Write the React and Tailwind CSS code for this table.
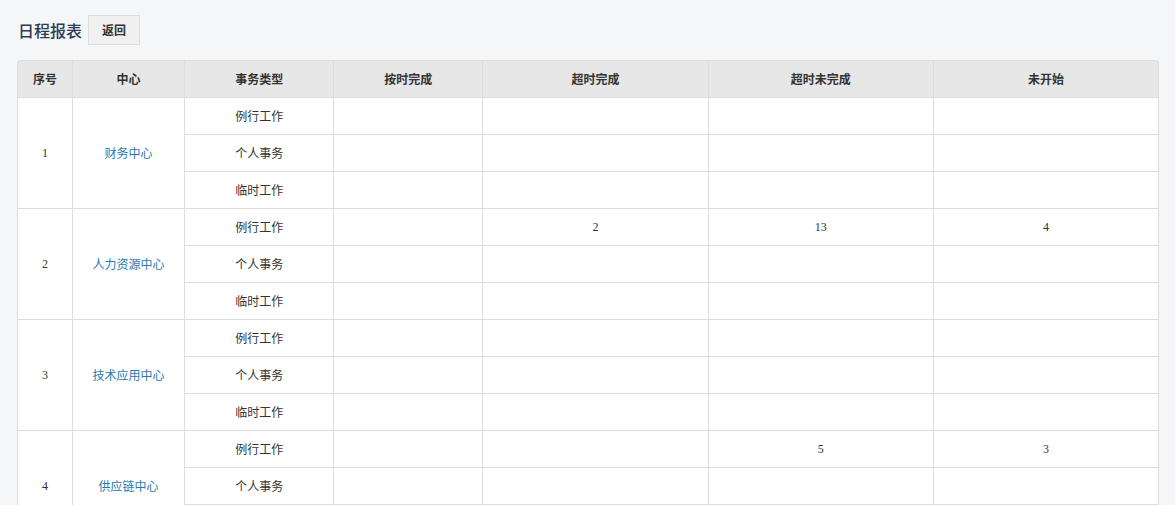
import React from 'react';

const cols = ['序号', '中心', '事务类型', '按时完成', '超时完成', '超时未完成', '未开始'];
const widths = ['w-[56px]', 'w-[112px]', 'w-[149px]', 'w-[149px]', 'w-[225px]', 'w-[225px]', 'w-[225px]'];
const types = ['例行工作', '个人事务', '临时工作'];

// values per center: [type][按时, 超时, 超时未完成, 未开始]
const centers = [
  { no: 1, name: '财务中心', data: [['', '', '', ''], ['', '', '', ''], ['', '', '', '']] },
  { no: 2, name: '人力资源中心', data: [['', '2', '13', '4'], ['', '', '', ''], ['', '', '', '']] },
  { no: 3, name: '技术应用中心', data: [['', '', '', ''], ['', '', '', ''], ['', '', '', '']] },
  { no: 4, name: '供应链中心', data: [['', '', '5', '3'], ['', '', '', ''], ['', '', '', '']] },
];

const cell = 'h-[37px] border-r border-b border-[#dddddd] text-center align-middle p-0';

export default function App() {
  return (
    <div
      className="min-h-screen bg-[#f5f6f8] pl-[17px] pt-[15px] text-[#333]"
      style={{ fontFamily: '"Noto Sans CJK SC", "Liberation Sans", sans-serif' }}
    >
      <div className="flex items-center h-[30px] mb-[15px]">
        <h1 className="ml-[1px] text-[16px] leading-none font-medium text-[#2b3a57]">日程报表</h1>
        <button
          type="button"
          className="ml-[6px] h-[30px] w-[52px] border border-[#dcdcdc] bg-[#f0f0f0] text-[12px] font-bold text-[#333]"
        >
          返回
        </button>
      </div>

      <table className="table-fixed border-separate border-spacing-0 w-[1142px] text-[12px]">
        <colgroup>
          {widths.map((w, i) => (
            <col key={i} className={w} />
          ))}
        </colgroup>
        <thead>
          <tr className="bg-[#e7e7e7]">
            {cols.map((c, i) => (
              <th
                key={c}
                className={`h-[38px] border-r border-b border-t border-[#dddddd] text-center align-middle p-0 font-bold text-[#333] ${
                  i === 0 ? 'border-l rounded-tl-[4px]' : ''
                } ${i === cols.length - 1 ? 'rounded-tr-[4px]' : ''}`}
              >
                {c}
              </th>
            ))}
          </tr>
        </thead>
        <tbody className="bg-white">
          {centers.map((c) =>
            c.data.map((row, r) => (
              <tr key={`${c.no}-${r}`}>
                {r === 0 && (
                  <>
                    <td rowSpan={3} className={`${cell} border-l`} style={{ fontFamily: '"Liberation Serif", serif' }}>
                      {c.no}
                    </td>
                    <td rowSpan={3} className={`${cell} text-[#2a7ab0]`}>
                      {c.name}
                    </td>
                  </>
                )}
                <td className={cell}>{types[r]}</td>
                {row.map((v, k) => (
                  <td key={k} className={cell} style={{ fontFamily: '"Liberation Serif", serif' }}>
                    {v}
                  </td>
                ))}
              </tr>
            ))
          )}
        </tbody>
      </table>
    </div>
  );
}
